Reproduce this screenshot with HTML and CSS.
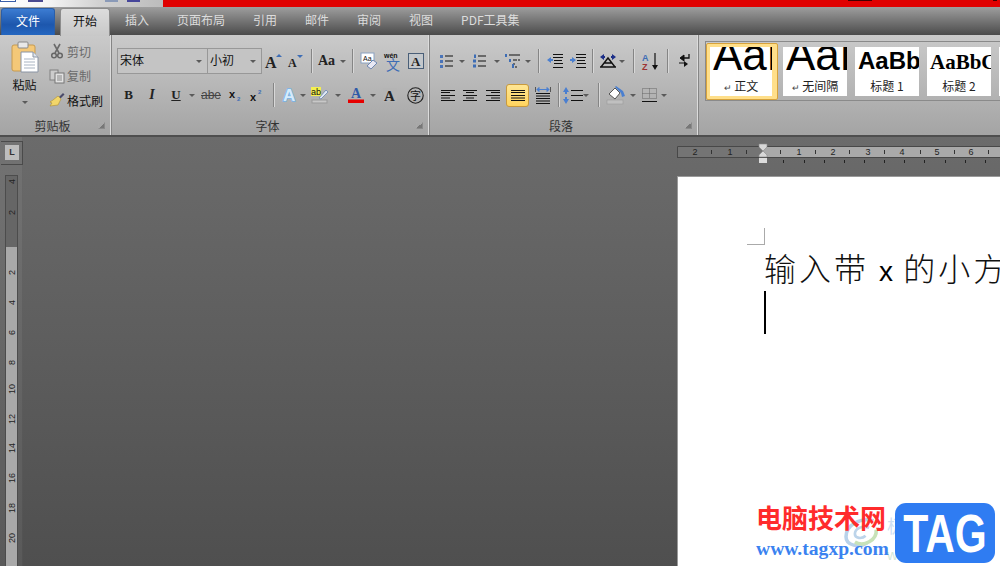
FILE: index.html
```html
<!DOCTYPE html>
<html lang="zh-CN">
<head>
<meta charset="utf-8">
<title>Word</title>
<link rel="stylesheet" href="styles.css">
</head>
<body>
<div class="app">
  <div class="titlebar">
    <div class="qat">
      <span class="q q1"></span><span class="q q2"></span><span class="q q3"></span><span class="q q4"></span>
    </div>
    <div class="title-red"><span class="speck s1"></span><span class="speck s2"></span></div>
  </div>

  <div class="tabs">
    <div class="tab file">文件</div>
    <div class="tab active">开始</div>
    <div class="tab">插入</div>
    <div class="tab">页面布局</div>
    <div class="tab">引用</div>
    <div class="tab">邮件</div>
    <div class="tab">审阅</div>
    <div class="tab">视图</div>
    <div class="tab">PDF工具集</div>
  </div>

  <div class="ribbon">
    <section class="group g-clip">
      <div class="clip-body">
        <div class="paste">
          <svg width="28" height="33" viewBox="0 0 28 33"><rect x="1" y="4" width="23" height="26" rx="2" fill="#f4c878" stroke="#c69a50"/><rect x="7" y="1" width="10" height="6" rx="1" fill="#e8e8e8" stroke="#888"/><path d="M10 11h12l5 5v15H10z" fill="#fff" stroke="#8a94a4"/><path d="M22 11v5h5" fill="#dfe6ee" stroke="#8a94a4"/><path d="M13 18h11M13 21h11M13 24h11M13 27h11" stroke="#a9b4c2"/></svg>
          <div class="paste-label">粘贴</div>
          <span class="caret"></span>
        </div>
        <div class="clip-list">
          <div class="clip-item muted">
            <svg width="16" height="16" viewBox="0 0 16 16"><path d="M5 1l5 9M11 1L6 10" stroke="#6a6a6a" stroke-width="1.6" fill="none"/><circle cx="5" cy="12.5" r="2.3" fill="none" stroke="#666" stroke-width="1.5"/><circle cx="11" cy="12.5" r="2.3" fill="none" stroke="#666" stroke-width="1.5"/></svg>
            <span>剪切</span>
          </div>
          <div class="clip-item muted">
            <svg width="16" height="14" viewBox="0 0 16 14"><rect x="1" y="1" width="8" height="10" fill="#ccc" stroke="#808080"/><rect x="6" y="4" width="9" height="10" fill="#e2e2e2" stroke="#777"/><path d="M8 7h5M8 9h5M8 11h5" stroke="#888"/></svg>
            <span>复制</span>
          </div>
          <div class="clip-item">
            <svg width="16" height="16" viewBox="0 0 16 16"><path d="M10 5l4-4 1.5 1.5-4 4z" fill="#4a4a6a"/><path d="M9 4l3 3-3 6-8 1 2-3-2-1 3-2z" fill="#f2d66a" stroke="#b09030" stroke-width=".6"/></svg>
            <span>格式刷</span>
          </div>
        </div>
      </div>
      <div class="group-label"><span></span><span>剪贴板</span><i class="launcher"></i></div>
    </section>

    <section class="group g-font">
      <div class="tools">
        <div class="row font-r1">
          <div class="select"><span>宋体</span><span class="caret"></span></div>
          <div class="select"><span>小初</span><span class="caret"></span></div>
          <svg width="18" height="16" viewBox="0 0 18 16"><text x="0" y="15" class="gl g-serif-b fs16">A</text><path d="M11 4l3-3 3 3z" fill="#3d6db5"/></svg>
          <svg width="16" height="14" viewBox="0 0 16 14"><text x="0" y="13" class="gl g-serif-b fs12">A</text><path d="M9 1h6l-3 3z" fill="#3d6db5"/></svg>
          <span class="sep"></span>
          <div class="cell-with-caret"><span class="aa">Aa</span><span class="caret"></span></div>
          <span class="sep"></span>
          <svg width="18" height="18" viewBox="0 0 18 18"><rect x="1" y="1" width="13" height="10" fill="#fff" stroke="#8aa2c2"/><text x="3" y="9" class="gl g-sans fs7">Aa</text><path d="M7 14l6-6 4 3-6 6z" fill="#e8e8f4" stroke="#7088b0"/></svg>
          <svg width="18" height="20" viewBox="0 0 18 20"><text x="0" y="6.500" class="gl g-sans-b fs7">wén</text><text x="2" y="19" class="gl g-cjk fs14 c-blue">文</text></svg>
          <svg width="16" height="16" viewBox="0 0 16 16"><rect x=".5" y=".5" width="15" height="15" fill="#c4c8cc" stroke="#4a5f78"/><text x="3" y="13" class="gl g-serif-b fs13">A</text></svg>
        </div>
        <div class="row font-r2">
          <span class="glyph b">B</span>
          <span class="glyph i">I</span>
          <span class="glyph u">U</span>
          <span class="caret"></span>
          <span class="glyph abe">abe</span>
          <svg width="14" height="13" viewBox="0 0 14 13"><text x="0" y="9" class="gl g-sans-b fs11">x</text><text x="8" y="12" class="gl g-sans-b fs6 c-blue">2</text></svg>
          <svg width="14" height="13" viewBox="0 0 14 13"><text x="0" y="12" class="gl g-sans-b fs11">x</text><text x="8" y="5" class="gl g-sans-b fs6 c-blue">2</text></svg>
          <span class="sep"></span>
          <svg width="16" height="18" viewBox="0 0 16 18"><text x="2" y="15" class="gl g-sans-b glow fs17">A</text></svg>
          <span class="caret"></span>
          <svg width="18" height="17" viewBox="0 0 18 17"><rect x="0" y="0" width="10" height="9" fill="#f4f050"/><text x="0" y="8" class="gl g-sans fs9">ab</text><path d="M8 11l7-8 2 2-7 7z" fill="#dfe8f4" stroke="#6a86b0" stroke-width=".8"/><rect x="1" y="13" width="15" height="3" fill="#c8c8c8" stroke="#999"/></svg>
          <span class="caret"></span>
          <svg width="16" height="16" viewBox="0 0 16 16"><text x="3" y="11" class="gl g-serif-b fs14 c-cobalt">A</text><rect x="0" y="12.500" width="16" height="3.500" fill="#e60000"/></svg>
          <span class="caret"></span>
          <svg width="14" height="14" viewBox="0 0 14 14"><rect width="14" height="14" fill="#b4b4b4"/><text x="1" y="12.500" class="gl g-serif-b fs15">A</text></svg>
          <svg width="17" height="17" viewBox="0 0 17 17"><circle cx="8.500" cy="8.500" r="7.700" fill="none" stroke="#222" stroke-width="1.100"/><text x="3" y="12.500" class="gl g-cjk fs11">字</text></svg>
        </div>
      </div>
      <div class="group-label"><span></span><span>字体</span><i class="launcher"></i></div>
    </section>

    <section class="group g-para">
      <div class="tools">
        <div class="row para-r1">
          <svg width="13" height="14" viewBox="0 0 13 14"><path d="M5 2h8M5 7h8M5 12h8" stroke="#111"/><path d="M0 1h3v3H0zM0 6h3v3H0zM0 11h3v3H0z" fill="#4a74b8"/></svg>
          <span class="caret"></span>
          <svg width="13" height="14" viewBox="0 0 13 14"><path d="M5 2h8M5 7h8M5 12h8" stroke="#111"/><path d="M1 .5h2v3.500H1zM0 5.500h3v3H0zM0 10.500h3v3H0z" fill="#3d6db5"/></svg>
          <span class="caret"></span>
          <svg width="15" height="14" viewBox="0 0 15 14"><path d="M4 1h11M8 6h4M13 6h2M8 10h2M10 13h2" stroke="#111"/><path d="M0 0h2v3H0zM4 5h2v3H4zM7 10h2v4H7z" fill="#3d6db5"/></svg>
          <span class="caret"></span>
          <span class="sep"></span>
          <svg width="16" height="14" viewBox="0 0 16 14"><path d="M6 .5h10M6 3.500h10M7 6.500h8M7 9.500h9M6 13.500h10" stroke="#111"/><path d="M0 6l4-3v2h2v2H4v2z" fill="#4a7fd0"/></svg>
          <svg width="16" height="14" viewBox="0 0 16 14"><path d="M6 .5h10M6 3.500h10M7 6.500h8M7 9.500h9M6 13.500h10" stroke="#111"/><path d="M6 6L2 3v2H0v2h2v2z" fill="#4a7fd0"/></svg>
          <span class="sep"></span>
          <svg width="17" height="14" viewBox="0 0 17 14"><path d="M1 13l7-9 7 9M4 9h8M0 13h16" stroke="#111" stroke-width="1.400" fill="none"/><path d="M0 3l4-3v2h1v2H4v2zM16 3l-4-3v2h-1v2h1v2z" fill="#1c2f88"/></svg>
          <span class="caret"></span>
          <span class="sep"></span>
          <svg width="17" height="17" viewBox="0 0 17 17"><text x="0" y="8" class="gl g-sans-b fs9 c-blue">A</text><text x="0" y="17" class="gl g-sans-b fs9 c-brick">Z</text><path d="M13 0v13" stroke="#111" stroke-width="1.200"/><path d="M10 12h6l-3 5z" fill="#111"/></svg>
          <span class="sep"></span>
          <svg width="11" height="14" viewBox="0 0 11 14"><path d="M10 0v4H4" stroke="#111" stroke-width="1.300" fill="none"/><path d="M5 1v6L1 4zM0 9h5" fill="#111" stroke="#111"/><path d="M5 7v6l4-3z" fill="#111"/></svg>
        </div>
        <div class="row para-r2">
          <svg width="14" height="11" viewBox="0 0 14 11"><path d="M0 .5h14M0 2.500h9M0 5.500h14M0 8h9M0 10.500h14" stroke="#111"/></svg>
          <svg width="14" height="11" viewBox="0 0 14 11"><path d="M0 .5h14M3 2.500h8M0 5.500h14M3 8h8M0 10.500h14" stroke="#111"/></svg>
          <svg width="14" height="11" viewBox="0 0 14 11"><path d="M0 .5h14M5 2.500h9M0 5.500h14M5 8h9M0 10.500h14" stroke="#111"/></svg>
          <div class="btn-on"><svg width="14" height="11" viewBox="0 0 14 11"><path d="M0 .5h14M0 2.500h14M0 5.500h14M0 8h14M0 10.500h14" stroke="#111"/></svg></div>
          <svg width="16" height="17" viewBox="0 0 16 17"><path d="M.5 0v5M15.500 0v5" stroke="#555"/><path d="M2 2.500h12M2 2.500l2-2v4zM14 2.500l-2-2v4z" stroke="#4a7fd0" fill="#4a7fd0"/><path d="M1 6.500h14M1 9h14M1 11.500h14M1 14h14M1 16.500h14" stroke="#111"/></svg>
          <span class="sep"></span>
          <div class="cell-with-caret tight">
            <svg width="20" height="17" viewBox="0 0 20 17"><path d="M3 0L0 5h2v2h2V5h2zM3 17L0 12h2v-2h2v2h2z" fill="#4a7fd0"/><path d="M8 3.500h12M8 8.500h12M8 13.500h12" stroke="#111"/></svg>
            <span class="caret"></span>
          </div>
          <span class="sep"></span>
          <svg width="18" height="18" viewBox="0 0 18 18"><rect x="0" y="14" width="16" height="4" fill="#c0c0c0" stroke="#999" stroke-width=".6"/><path d="M2 8l6-6 5 5-5 6z" fill="#fff" stroke="#333" stroke-width=".8"/><path d="M8 1l1-1 7 5 2 5-3 1-1-4z" fill="#4a7fd0"/></svg>
          <span class="caret"></span>
          <svg width="15" height="14" viewBox="0 0 15 14"><path d="M.5.500h14v10H.500zM7.500.500v10M.5 5.500h14" fill="none" stroke="#666" stroke-dasharray="1 1"/><path d="M0 13.500h15" stroke="#111"/></svg>
          <span class="caret"></span>
        </div>
      </div>
      <div class="group-label"><span></span><span>段落</span><i class="launcher"></i></div>
    </section>

    <section class="group g-styles">
      <div class="gallery">
        <div class="style-card selected">
          <div class="style-inner">
            <div class="preview p-normal">AaB</div>
            <div class="style-name"><span class="ret">↵</span> 正文</div>
          </div>
        </div>
        <div class="style-inner">
          <div class="preview p-normal">AaB</div>
          <div class="style-name"><span class="ret">↵</span> 无间隔</div>
        </div>
        <div class="style-inner">
          <div class="preview p-h1">AaBbC</div>
          <div class="style-name">标题 1</div>
        </div>
        <div class="style-inner">
          <div class="preview p-h2">AaBbC</div>
          <div class="style-name">标题 2</div>
        </div>
        <div class="style-inner"></div>
      </div>
    </section>
  </div>

  <main class="work">
    <aside class="vside">
      <div class="corner"><div class="corner-in">L</div></div>
      <svg class="vruler" width="13" height="391" viewBox="0 0 13 391">
        <rect width="13" height="391" fill="#a9a9a9"/>
        <rect width="13" height="72" fill="#666"/>
        <rect x=".5" y=".5" width="12" height="391" fill="none" stroke="#4c4c4c"/>
        <g class="vnums">
          <text transform="translate(10 9) rotate(-90)">4</text>
          <text transform="translate(10 40) rotate(-90)">2</text>
          <text transform="translate(10 100) rotate(-90)">2</text>
          <text transform="translate(10 130) rotate(-90)">4</text>
          <text transform="translate(10 160) rotate(-90)">6</text>
          <text transform="translate(10 190) rotate(-90)">8</text>
          <text transform="translate(10 219) rotate(-90)">10</text>
          <text transform="translate(10 249) rotate(-90)">12</text>
          <text transform="translate(10 278) rotate(-90)">14</text>
          <text transform="translate(10 308) rotate(-90)">16</text>
          <text transform="translate(10 338) rotate(-90)">18</text>
          <text transform="translate(10 368) rotate(-90)">20</text>
        </g>
      </svg>
    </aside>
    <div class="canvas"></div>
    <div class="pagecol">
      <svg class="hruler" width="323" height="39" viewBox="0 0 323 39">
        <rect x="0" y="9" width="323" height="12" fill="#a9a9a9"/>
        <rect x="0" y="9" width="86" height="12" fill="#747474"/>
        <path d="M.5 21V9.500H323M0 20.500H323" fill="none" stroke="#484848"/>
        <g class="hnums">
          <text x="18" y="18">2</text><text x="53" y="18">1</text><text x="122" y="18">1</text><text x="156" y="18">2</text><text x="191" y="18">3</text><text x="225" y="18">4</text><text x="260" y="18">5</text><text x="294" y="18">6</text>
        </g>
        <path d="M34.500 13v4M69.500 13v4M103.500 13v4M138.500 13v4M172.500 13v4M207.500 13v4M243.500 13v4M277.500 13v4M311.500 13v4" stroke="#333"/>
        <path d="M106.500 23v3M127.500 23v3M147.500 23v3M167.500 23v3M187.500 23v3M207.500 23v3M227.500 23v3M247.500 23v3M268.500 23v3M288.500 23v3M308.500 23v3" stroke="#222"/>
        <path d="M82 7h8v3l-4 4-4-4zM86 14l4 4v2h-8v-2z" fill="#d8d8d8" stroke="#8a8a8a" stroke-width=".6"/>
        <rect x="82" y="21" width="8" height="5" fill="#dcdcdc"/>
      </svg>
      <div class="page">
        <div class="margin-mark"></div>
        <p class="doc-line">输入带 <span class="latin">x</span> 的小方块</p>
        <div class="cursor"></div>
      </div>
    </div>
  </main>

  <div class="watermark">
    <div class="wm-ghost">极光下载站</div>
    <div class="wm-ghost-url">www.xz7.com</div>
    <svg class="wm-swirl" width="40" height="32" viewBox="0 0 40 36"><path d="M33 3C18-1 2 8 2 21c0 10 15 13 24 7" fill="none" stroke="#b8d2ea" stroke-width="4"/><path d="M36 13c1 12-14 20-24 14" fill="none" stroke="#c8e2b8" stroke-width="4"/><path d="M28 11c-8-3-16 1-16 7 0 5 8 6 12 2" fill="none" stroke="#bcd4ea" stroke-width="3"/></svg>
    <div class="wm-title">电脑技术网</div>
    <div class="wm-url">www.tagxp.com</div>
    <div class="wm-tag"><span>TAG</span></div>
  </div>
</div>
</body>
</html>
```
FILE: styles.css
```css
* { box-sizing: border-box; }
html, body { margin: 0; padding: 0; }
body { font-family: "Noto Sans CJK SC", "Liberation Sans", sans-serif; font-size: 12px; color: #111; }
svg { overflow: visible; }

.app { position: relative; width: 1000px; height: 566px; overflow: hidden; display: flex; flex-direction: column; background: #666; }

/* title strip */
.titlebar { height: 7px; display: flex; flex: none; }
.qat { width: 163px; display: flex; background: linear-gradient(90deg, #ffffff 0%, #f4f4f4 30%, #d2d2d2 60%, #bcbcbc 100%); }
.q { height: 2px; display: block; }
.q1 { width: 16px; background: #fff; border: 1px solid #3a5ea8; border-top: 0; }
.q2 { width: 15px; margin-left: 12px; background: #4a4a90; }
.q3 { width: 13px; margin-left: 62px; background: #8a9ab8; }
.q4 { width: 13px; margin-left: 9px; background: #45459a; }
.title-red { flex: 1; background: #e00000; display: flex; }
.speck { height: 1px; background: #400; }
.s1 { width: 24px; margin-left: 685px; }
.s2 { width: 4px; margin-left: 121px; }

/* tabs */
.tabs { height: 28px; flex: none; display: flex; align-items: flex-end; gap: 28px; padding-left: 1px; background: linear-gradient(#9e9e9e, #4b4b4b); }
.tab { height: 27px; color: #dcdcdc; line-height: 23px; white-space: nowrap; }
.tab.file { width: 54px; margin-right: -23px; text-align: center; color: #fff; border: 1px solid #2a5ea8; border-bottom: 0; border-radius: 3px 3px 0 0; background: linear-gradient(#3c7cd2, #1d57ad 60%, #2466c0); }
.tab.active { width: 50px; margin-right: -13px; text-align: center; color: #111; background: linear-gradient(#dcdcdc, #c8c8c8); border: 1px solid #8c8c8c; border-bottom: 0; border-radius: 3px 3px 0 0; height: 28px; margin-bottom: -1px; position: relative; }

/* ribbon */
.ribbon { height: 102px; flex: none; display: flex; background: linear-gradient(#cacaca, #a4a4a4); border-bottom: 2px solid #4e4e4e; }
.group { flex: none; display: flex; flex-direction: column; border-right: 1px solid #858585; box-shadow: inset -1px 0 0 #dcdcdc; }
.g-clip { width: 112px; }
.g-font { width: 318px; }
.g-para { width: 269px; }
.g-styles { flex: 1 1 0; min-width: 0; border-right: 0; box-shadow: none; padding: 6px 0 0 6px; }
.group-label { height: 17px; flex: none; display: grid; grid-template-columns: 1fr auto 1fr; align-items: center; text-align: center; color: #333; line-height: 15px; padding: 0 6px 2px 0; }
.launcher { justify-self: end; width: 7px; height: 7px; border: 1px solid #8a8a8a; border-top-color: #aaa; border-left-color: #aaa; background: linear-gradient(135deg, transparent 50%, #777 50%); }

.caret { display: inline-block; width: 0; height: 0; border: 3px solid transparent; border-top: 3px solid #5a5a5a; border-bottom: 0; }
.sep { display: block; width: 1px; height: 24px; background: #858585; box-shadow: 1px 0 0 #d8d8d8; }

/* clipboard */
.clip-body { flex: 1; display: flex; padding: 6px 0 0 10px; }
.paste { width: 29px; display: flex; flex-direction: column; align-items: center; }
.paste-label { margin-top: 2px; line-height: 17px; color: #111; }
.paste .caret { margin-top: 8px; }
.clip-list { margin: -2px 0 0 10px; display: flex; flex-direction: column; }
.clip-item { height: 24.5px; display: flex; align-items: center; gap: 2px; width: 60px; }
.clip-item svg { flex: none; width: 16px; }
.clip-item.muted { color: #6a6a6a; }

/* tool grids */
.tools { flex: 1; display: flex; flex-direction: column; padding-top: 13px; gap: 9px; }
.row { display: grid; align-items: center; justify-items: center; height: 24px; }
.font-r1 { grid-template-columns: 91px 54px 24px 20px 10px 32px 8px 25px 23px 23px; margin-left: 5px; height: 26px; }
.font-r2 { grid-template-columns: 23px 24px 24px 8px 30px 20px 22px 10px 21px 8px 26px 10px 26px 7px 27px 24px; margin-left: 5px; }
.para-r1 { grid-template-columns: 21px 10px 25px 10px 21px 9px 12px 22px 23px 7px 24px 4px 18px 17px 17px 17px; margin-left: 6px; height: 26px; }
.para-r2 { grid-template-columns: 23px 22px 24px 25px 25px 6px 30px 14px 22px 11px 22px 8px; margin-left: 6px; }

.select { justify-self: stretch; height: 26px; display: flex; align-items: center; justify-content: space-between; padding: 0 5px 3px 2px; border: 1px solid #989898; background: #c4c4c4; color: #111; }
.select + .select { margin-left: -1px; }
.select .caret { margin-top: 3px; }
.cell-with-caret { display: flex; align-items: center; gap: 5px; }
.cell-with-caret.tight { gap: 0; }
.aa { font: bold 14px "Liberation Serif", serif; color: #222; }
.glyph { font: bold 13px "Liberation Serif", serif; color: #222; }
.glyph.i { font-style: italic; font-size: 14px; }
.glyph.u { text-decoration: underline; }
.glyph.abe { font-family: "Liberation Sans", sans-serif; font-weight: normal; font-size: 12px; text-decoration: line-through; color: #444; }
.btn-on { justify-self: stretch; margin: 0 1px; height: 23px; display: flex; align-items: center; justify-content: center; background: linear-gradient(#ffe694, #ffd45e); border: 1px solid #c99a3c; border-radius: 3px; }

/* svg glyph classes */
.gl { fill: #111; }
.g-serif-b { font-family: "Liberation Serif", serif; font-weight: bold; fill: #222; }
.g-sans { font-family: "Liberation Sans", sans-serif; }
.g-sans-b { font-family: "Liberation Sans", sans-serif; font-weight: bold; }
.g-cjk { font-family: "Noto Sans CJK SC", sans-serif; }
.g-sans-b.glow { fill: #d6ebfb; stroke: #78b4e8; stroke-width: 1.6px; paint-order: stroke; }
.fs6 { font-size: 6px; } .fs7 { font-size: 7px; } .fs9 { font-size: 9px; } .fs11 { font-size: 11px; }
.fs12 { font-size: 12px; } .fs13 { font-size: 13px; } .fs14 { font-size: 14px; } .fs15 { font-size: 15px; }
.fs16 { font-size: 16px; } .fs17 { font-size: 17px; }
.c-blue { fill: #3d6db5; } .c-cobalt { fill: #2f5aa8; } .c-brick { fill: #9c3333; }

/* styles gallery */
.gallery { height: 60px; display: flex; align-items: center; gap: 5px; border: 1px solid #8a8a8a; border-right: 0; overflow: hidden; }
.style-inner { flex: none; width: 64px; height: 49px; background: #fff; display: flex; flex-direction: column; overflow: hidden; margin-right: 3px; }
.style-card.selected { flex: none; padding: 3px 5px 3px 3px; border: 1px solid #d6a23c; border-radius: 2px; background: #ffdf8a; }
.style-card.selected .style-inner { width: 62px; margin-right: 0; }
.preview { flex: none; height: 27px; overflow: hidden; white-space: nowrap; color: #000; padding-left: 3px; }
.p-normal { font: 44px/16px "Liberation Sans", sans-serif; }
.p-h1 { font: bold 24px/28px "Liberation Sans", sans-serif; }
.p-h2 { font: bold 21px/30px "Liberation Serif", serif; }
.style-name { height: 22px; line-height: 24px; text-align: center; color: #222; white-space: nowrap; }
.ret { font-size: 9px; color: #444; }

/* work area */
.work { flex: 1; min-height: 0; display: flex; background: linear-gradient(#6b6b6b, #4f4f4f); }
.vside { width: 23px; flex: none; display: flex; flex-direction: column; background: rgba(255,255,255,.06); border-right: 1px solid rgba(0,0,0,.08); }
.corner { width: 22px; height: 24px; margin: 4px 0 0 1px; border: 1px solid #4a4a4a; border-left: 0; padding: 3px 4px; }
.corner-in { width: 14px; height: 15px; background: #bdbdbd; color: #333; font: bold 9px/15px "Liberation Sans", sans-serif; text-align: center; }
.vruler { margin: 10px 0 0 5px; flex: none; }
.vnums text { font: 9px "Liberation Sans", sans-serif; fill: #222; }
.canvas { flex: 1; }
.pagecol { width: 323px; flex: none; display: flex; flex-direction: column; }
.hruler { flex: none; display: block; }
.hnums text { font: 9px "Liberation Sans", sans-serif; fill: #222; text-anchor: middle; }
.page { flex: 1; min-height: 0; background: #fff; border-top: 1px solid #9a9a9a; border-left: 1px solid #9a9a9a; padding: 51px 0 0 69px; overflow: hidden; }
.margin-mark { width: 18px; height: 17px; border-right: 1px solid #aaa; border-bottom: 1px solid #aaa; }
.doc-line { margin: 0 0 2px 17px; width: 400px; font: 300 32px/44px "Noto Sans CJK SC", sans-serif; letter-spacing: 3px; white-space: nowrap; color: #111; }
.latin { font: 28px "Liberation Sans", sans-serif; color: #000; letter-spacing: 0; }
.cursor { width: 2px; height: 43px; margin: 0 0 0 17px; background: #000; }

/* watermark */
.watermark { position: absolute; left: 756px; top: 503px; width: 240px; height: 62px; }
.wm-ghost { position: absolute; left: 131px; top: 9px; font-size: 18px; line-height: 26px; color: #cfe0f2; white-space: nowrap; }
.wm-ghost-url { position: absolute; left: 131px; top: 43px; font: 15px "Liberation Sans", sans-serif; color: #d4e8d8; }
.wm-swirl { position: absolute; left: 86px; top: 15px; }
.wm-title { position: absolute; left: 0; top: -3px; font: bold 26px/34px "Noto Sans CJK SC", sans-serif; color: #ff2b2b; white-space: nowrap; }
.wm-url { position: absolute; left: 0; top: 33px; font: bold 19.6px/26px "Liberation Serif", serif; color: #3a82f0; white-space: nowrap; }
.wm-tag { position: absolute; left: 139px; top: 0; width: 100px; height: 60px; border-radius: 11px; background: #2f7cf2; color: #fff; font: bold 54px/60px "Liberation Sans", sans-serif; text-align: center; display: flex; justify-content: center; }
.wm-tag span { display: block; transform: scaleX(.76); }
```
